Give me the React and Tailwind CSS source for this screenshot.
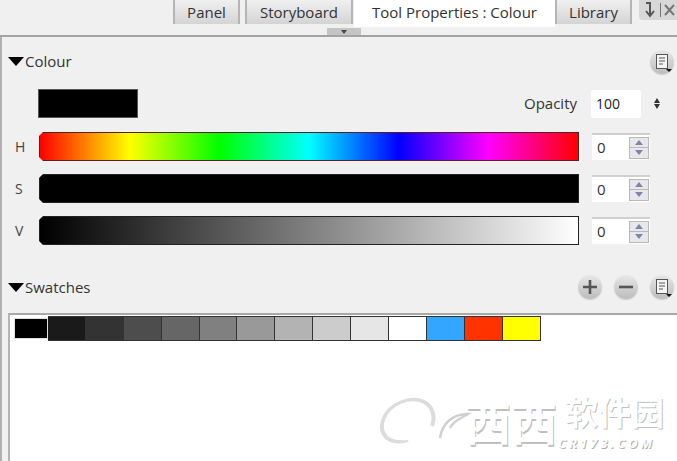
const grays = ["#1a1a1a", "#333333", "#4d4d4d", "#666666", "#808080", "#999999", "#b3b3b3", "#cccccc", "#e6e6e6", "#ffffff", "#33a6ff", "#ff3300", "#ffff00"];

function Triangle() {
  return <span className="h-0 w-0 border-x-[8px] border-t-[9px] border-x-transparent border-t-black" />;
}

function RoundButton({ children }) {
  return (
    <div className="relative flex h-[24px] w-[24px] items-center justify-center rounded-full bg-gradient-to-b from-[#e8e8e8] to-[#bcbcbc] shadow-[0_1px_1px_#ccc]">
      {children}
    </div>
  );
}

function MenuButton() {
  return (
    <RoundButton>
      <svg width="24" height="24" viewBox="0 0 24 24" fill="none">
        <rect x="6.5" y="4.5" width="11" height="14" fill="#f4f4f4" stroke="#555" />
        <path d="M9 8h6M9 11h6M9 14h4" stroke="#555" strokeWidth="1" />
        <path d="M16 19h6l-3 3z" fill="#111" />
      </svg>
    </RoundButton>
  );
}

function Tab({ label, className, active }) {
  return (
    <div
      className={`flex items-center justify-center text-[15px] text-[#333] ${className} ${
        active
          ? "h-[27px] bg-white pb-[3px]"
          : "h-[24px] border-x-2 border-x-[#b5b5b5] bg-gradient-to-b from-[#f0f0f0] to-[#d4d4d4]"
      }`}
    >
      {label}
    </div>
  );
}

function ColourRow({ letter, barClass, borderClass }) {
  return (
    <div className="flex h-[29px] items-center">
      <div className="w-[37px] pl-[13px] text-[14px] text-[#444]">{letter}</div>
      <div className={`relative h-[29px] w-[540px] border ${borderClass} ${barClass}`}>
        <span className="absolute -left-px -top-px h-[4px] w-[4px] bg-[#f0f0f0] [clip-path:polygon(0_0,100%_0,0_100%)]" />
        <span className="absolute -bottom-px -left-px h-[4px] w-[4px] bg-[#f0f0f0] [clip-path:polygon(0_0,100%_100%,0_100%)]" />
      </div>
      <div className="ml-[13px] flex h-[27px] w-[58px] items-center justify-between border-t-2 border-t-[#d0d0d0] bg-white pl-[5px] pr-px text-[15px] text-[#333]">
        0
        <div className="flex h-[22px] w-[20px] flex-col border border-[#b8b8b8] bg-[#e8e8ec]">
          <div className="flex flex-1 items-center justify-center border-b border-b-[#b8b8b8]">
            <span className="h-0 w-0 border-x-[4px] border-b-[5px] border-x-transparent border-b-[#7d86a8]" />
          </div>
          <div className="flex flex-1 items-center justify-center">
            <span className="h-0 w-0 border-x-[4px] border-t-[5px] border-x-transparent border-t-[#7d86a8]" />
          </div>
        </div>
      </div>
    </div>
  );
}

export default function App() {
  return (
    <div className="relative flex h-[461px] w-[677px] flex-col overflow-hidden bg-[#f0f0f0] font-['Open_Sans',sans-serif]">
      <div className="relative flex h-[37px] items-start border-b-2 border-b-[#a3a3a3] pl-[173px]">
        <Tab label="Panel" className="w-[67px]" />
        <Tab label="Storyboard" className="ml-[5px] w-[108px]" />
        <Tab label="Tool Properties : Colour" className="ml-px w-[201px]" active />
        <Tab label="Library" className="w-[77px]" />
        <div className="ml-[7px] flex h-[20px] w-[38px] items-center gap-[2px] rounded-bl-[4px] bg-[#d8d8d8] pl-[3px] text-[#555]">
          <svg width="16" height="18" viewBox="0 0 16 18" fill="none" stroke="#555" strokeWidth="2">
            <path d="M4 2h4v12M4 10l4 5 4-5" />
          </svg>
          <span className="h-[14px] w-px bg-[#777]" />
          <svg width="12" height="14" viewBox="0 0 12 14" stroke="#777" strokeWidth="2">
            <path d="M2 2l9 10M11 2L2 12" />
          </svg>
        </div>
        <div className="absolute left-[327px] top-[28px] flex h-[7px] w-[34px] items-center justify-center bg-[#c4c4c4]">
          <span className="h-0 w-0 border-x-[3px] border-t-[4px] border-x-transparent border-t-[#444]" />
        </div>
      </div>

      <div className="flex flex-1 flex-col border-l-2 border-l-[#b0b0b0]">
        <div className="flex h-[52px] items-center pb-[3px] pl-[6px] pr-[3px]">
          <Triangle />
          <span className="ml-px text-[15px] text-[#333]">Colour</span>
          <div className="ml-auto">
            <MenuButton />
          </div>
        </div>

        <div className="flex h-[29px] items-center">
          <div className="ml-[36px] h-[29px] w-[100px] border border-[#555] bg-black" />
          <span className="ml-[386px] text-[15px] text-[#333]">Opacity</span>
          <div className="ml-[14px] flex h-[28px] w-[50px] items-center rounded-[2px] bg-white pl-[5px] text-[14px] text-[#222]">
            100
          </div>
          <div className="ml-[13px] flex flex-col gap-[1px]">
            <span className="h-0 w-0 border-x-[3.5px] border-b-[5px] border-x-transparent border-b-[#333]" />
            <span className="h-0 w-0 border-x-[3.5px] border-t-[5px] border-x-transparent border-t-[#333]" />
          </div>
        </div>

        <div className="mt-[14px] flex flex-col gap-[13px]">
          <ColourRow
            letter="H"
            borderClass="border-[#552222]"
            barClass="bg-[linear-gradient(to_right,#ff0000,#ffff00_16.67%,#00ff00_33.33%,#00ffff_50%,#0000ff_66.67%,#ff00ff_83.33%,#ff0000)]"
          />
          <ColourRow letter="S" borderClass="border-[#222]" barClass="bg-black" />
          <ColourRow
            letter="V"
            borderClass="border-[#222]"
            barClass="bg-[linear-gradient(to_right,#000000,#ffffff)]"
          />
        </div>

        <div className="mt-[27px] flex h-[30px] items-center pl-[6px] pr-[3px]">
          <Triangle />
          <span className="ml-px text-[15px] text-[#333]">Swatches</span>
          <div className="ml-auto flex gap-[12px]">
            <RoundButton>
              <svg width="16" height="16" viewBox="0 0 16 16" stroke="#555" strokeWidth="2.6">
                <path d="M8 1v14M1 8h14" />
              </svg>
            </RoundButton>
            <RoundButton>
              <svg width="16" height="16" viewBox="0 0 16 16" stroke="#555" strokeWidth="2.6">
                <path d="M1 8h14" />
              </svg>
            </RoundButton>
            <MenuButton />
          </div>
        </div>

        <div className="mt-[11px] ml-[6px] flex-1 border-l-2 border-t-2 border-l-[#b4b4b4] border-t-[#a8a8a8] bg-white pl-[4px] pt-px">
          <div className="flex h-[25px] items-stretch">
            <div className="my-[2px] w-[34px] border border-[#e0e0e0] bg-black" />
            {grays.map((c) => (
              <div
                key={c}
                className="w-[37.9px] border border-l-0 border-[#333] first:border-l"
                style={{ backgroundColor: c }}
              />
            ))}
          </div>
        </div>
      </div>

      {/* watermark over the swatch area */}
      <div className="absolute left-[380px] top-[394px] h-[67px] w-[297px]">
        <svg className="absolute left-0 top-0" width="100" height="62" viewBox="0 0 100 62" fill="none">
          <path d="M28 46C6 52 -2 38 4 24C10 10 30 2 44 8C52 12 56 22 52 32" stroke="#dcdcdc" strokeWidth="4" />
          <path d="M30 44C10 48 2 36 7 25C13 12 30 5 43 11" stroke="#ffffff" strokeWidth="3" />
          <path d="M60 44C62 30 72 20 88 20C82 24 74 26 70 34" stroke="#d0d0d0" strokeWidth="2.5" />
        </svg>
        <span className="absolute left-[85px] top-[-6px] font-['Noto_Sans_CJK_SC',sans-serif] text-[46px] font-bold leading-[64px] text-white [text-shadow:1px_2px_0_#c0c0c0]">
          西西
        </span>
        <span className="absolute left-[185px] top-[-3px] font-['Noto_Sans_CJK_SC',sans-serif] text-[33px] font-bold leading-[40px] text-white [text-shadow:1px_1px_0_#c0c0c0]">
          软件园
        </span>
        <span className="absolute left-[178px] top-[41px] text-[13px] font-bold italic leading-[16px] tracking-[3px] text-white [text-shadow:1px_1px_0_#b0b0b0]">
          CR173.COM
        </span>
      </div>
    </div>
  );
}
